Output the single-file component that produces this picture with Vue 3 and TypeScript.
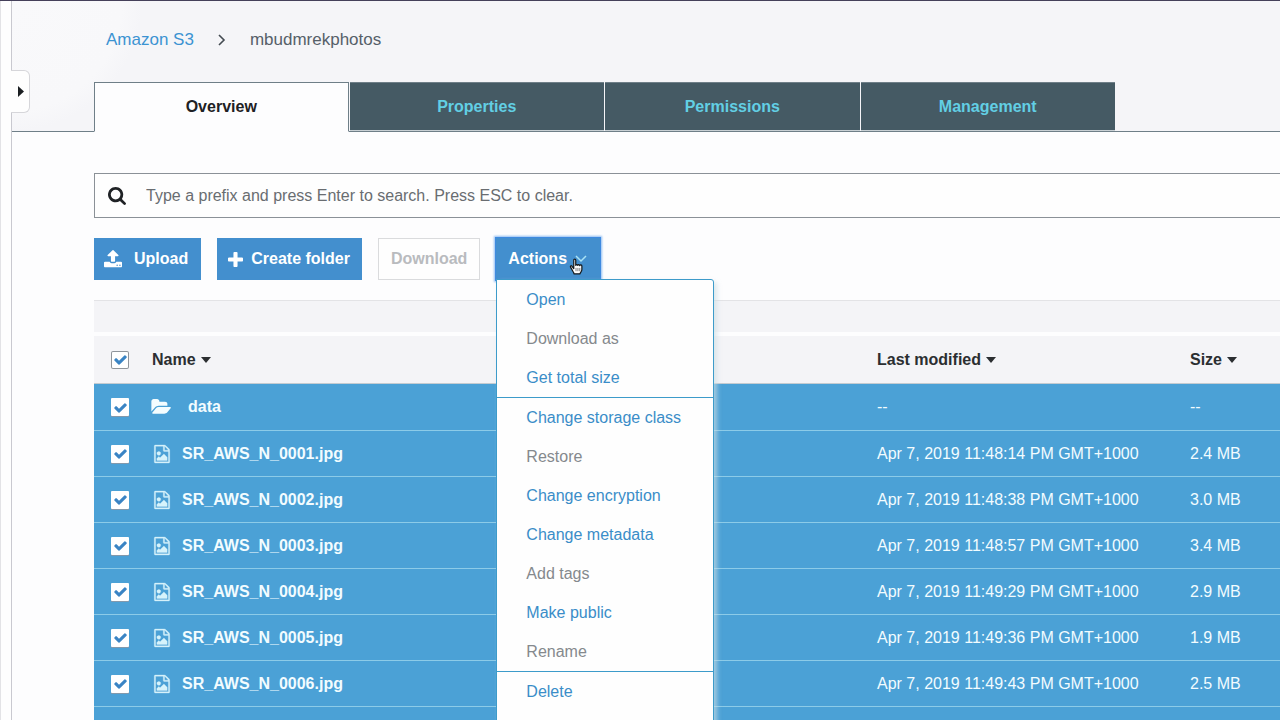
<script setup lang="ts">
import { ref } from 'vue'

interface S3Object {
  name: string
  kind: 'folder' | 'image'
  modified: string
  size: string
}

interface MenuAction {
  label: string
  enabled: boolean
}

const tabs = ['Overview', 'Properties', 'Permissions', 'Management']
const activeTab = ref('Overview')
const prefix = ref('')

const objects: S3Object[] = [
  { name: 'data', kind: 'folder', modified: '--', size: '--' },
  { name: 'SR_AWS_N_0001.jpg', kind: 'image', modified: 'Apr 7, 2019 11:48:14 PM GMT+1000', size: '2.4 MB' },
  { name: 'SR_AWS_N_0002.jpg', kind: 'image', modified: 'Apr 7, 2019 11:48:38 PM GMT+1000', size: '3.0 MB' },
  { name: 'SR_AWS_N_0003.jpg', kind: 'image', modified: 'Apr 7, 2019 11:48:57 PM GMT+1000', size: '3.4 MB' },
  { name: 'SR_AWS_N_0004.jpg', kind: 'image', modified: 'Apr 7, 2019 11:49:29 PM GMT+1000', size: '2.9 MB' },
  { name: 'SR_AWS_N_0005.jpg', kind: 'image', modified: 'Apr 7, 2019 11:49:36 PM GMT+1000', size: '1.9 MB' },
  { name: 'SR_AWS_N_0006.jpg', kind: 'image', modified: 'Apr 7, 2019 11:49:43 PM GMT+1000', size: '2.5 MB' },
]

const menuGroups: MenuAction[][] = [
  [
    { label: 'Open', enabled: true },
    { label: 'Download as', enabled: false },
    { label: 'Get total size', enabled: true },
  ],
  [
    { label: 'Change storage class', enabled: true },
    { label: 'Restore', enabled: false },
    { label: 'Change encryption', enabled: true },
    { label: 'Change metadata', enabled: true },
    { label: 'Add tags', enabled: false },
    { label: 'Make public', enabled: true },
    { label: 'Rename', enabled: false },
  ],
  [{ label: 'Delete', enabled: true }],
]

const checkPath =
  'M1671 566q0 40-28 68l-724 724-136 136q-28 28-68 28t-68-28l-136-136-362-362q-28-28-28-68t28-68l136-136q28-28 68-28t68 28l294 295 656-657q28-28 68-28t68 28l136 136q28 28 28 68z'
</script>

<template>
  <div class="shell">
    <aside class="rail">
      <button class="rail-toggle" type="button" aria-label="Expand sidebar">
        <svg width="6" height="11" viewBox="0 0 6 11"><path d="M0 0 6 5.5 0 11z" fill="#1b1f22" /></svg>
      </button>
    </aside>

    <div class="page">
      <header class="head">
        <nav class="crumbs" aria-label="Breadcrumb">
          <a href="#">Amazon S3</a>
          <svg width="8" height="12" viewBox="0 0 8 12"><path d="M1 1l5 5-5 5" fill="none" stroke="#444b52" stroke-width="1.6" /></svg>
          <span>mbudmrekphotos</span>
        </nav>
        <div class="tabs" role="tablist">
          <button
            v-for="tab in tabs"
            :key="tab"
            type="button"
            role="tab"
            class="tab"
            :class="{ active: tab === activeTab }"
            :aria-selected="tab === activeTab"
            @click="activeTab = tab"
          >{{ tab }}</button>
        </div>
      </header>

      <main class="content">
        <label class="search">
          <svg width="18" height="18" viewBox="64 128 1664 1664" aria-hidden="true">
            <path fill="#1f2225" d="M1216 832q0-185-131.5-316.5t-316.5-131.5-316.5 131.5-131.5 316.5 131.5 316.5 316.5 131.5 316.5-131.5 131.5-316.5zm512 832q0 52-38 90t-90 38q-54 0-90-38l-343-342q-179 124-399 124-143 0-273.5-55.5t-225-150-150-225-55.5-273.5 55.5-273.5 150-225 225-150 273.5-55.5 273.5 55.5 225 150 150 225 55.5 273.5q0 220-124 399l343 343q37 37 37 90z" />
          </svg>
          <input v-model="prefix" type="text" aria-label="Search by prefix" placeholder="Type a prefix and press Enter to search. Press ESC to clear." />
        </label>

        <div class="toolbar">
          <button class="btn upload" type="button">
            <svg width="18" height="18" viewBox="64 64 1664 1664" aria-hidden="true">
              <path fill="#fff" d="M1344 1472q0-26-19-45t-45-19-45 19-19 45 19 45 45 19 45-19 19-45zm256 0q0-26-19-45t-45-19-45 19-19 45 19 45 45 19 45-19 19-45zm128-224v320q0 40-28 68t-68 28h-1472q-40 0-68-28t-28-68v-320q0-40 28-68t68-28h427q21 56 70.5 92t110.5 36h256q61 0 110.5-36t70.5-92h427q40 0 68 28t28 68zm-325-648q-17 40-59 40h-256v448q0 26-19 45t-45 19h-256q-26 0-45-19t-19-45v-448h-256q-42 0-59-40-17-39 14-69l448-448q18-19 45-19t45 19l448 448q31 30 14 69z" />
            </svg>
            Upload
          </button>
          <button class="btn create" type="button">
            <svg width="15" height="15" viewBox="192 128 1408 1408" aria-hidden="true">
              <path fill="#fff" d="M1600 736v192q0 40-28 68t-68 28h-416v416q0 40-28 68t-68 28h-192q-40 0-68-28t-28-68v-416h-416q-40 0-68-28t-28-68v-192q0-40 28-68t68-28h416v-416q0-40 28-68t68-28h192q40 0 68 28t28 68v416h416q40 0 68 28t28 68z" />
            </svg>
            Create folder
          </button>
          <button class="btn download" type="button" disabled>Download</button>
          <div class="actions">
            <button class="btn actions-btn" type="button" aria-haspopup="menu" aria-expanded="true">
              Actions
              <svg width="12" height="8" viewBox="0 0 12 8" aria-hidden="true"><path d="M1 1l5 5 5-5" fill="none" stroke="#a9e2f5" stroke-width="1.5" /></svg>
            </button>
            <svg class="pointer" width="15" height="17" viewBox="0 0 15 18" aria-hidden="true">
              <path d="M4.6 11.2 2.6 8.700C1.700 7.600.6 8.600 1.200 9.700l2.600 4.600c.5.8 1 1.200 1 2.500h6.400c0-1.200 2-2.300 2-4.600V8.400c0-1.300-2.100-1.400-2.300-.3-.1-1.400-1.900-1.500-2.100-.3-.2-1.200-1.900-1.200-2.100 0V2.400C6.700.7 4.600.7 4.600 2.400z" fill="#fff" stroke="#15191c" stroke-width="1.3" stroke-linejoin="round" />
              <path d="M7 10.500v3.500M9 10.500v3.500M11 10.500v3.500" stroke="#15191c" stroke-width="0.6" />
            </svg>
            <div class="menu" role="menu">
              <div v-for="(group, index) in menuGroups" :key="index" class="menu-group">
                <button
                  v-for="item in group"
                  :key="item.label"
                  type="button"
                  role="menuitem"
                  class="menu-item"
                  :disabled="!item.enabled"
                >{{ item.label }}</button>
              </div>
            </div>
          </div>
        </div>

        <div class="summary"></div>

        <div class="listing">
          <table>
            <colgroup>
              <col class="col-check" />
              <col />
              <col class="col-modified" />
              <col class="col-size" />
            </colgroup>
            <thead>
              <tr>
                <th>
                  <label class="check">
                    <input type="checkbox" checked aria-label="Select all" />
                    <svg width="13" height="13" viewBox="96 64 1600 1600"><path :d="checkPath" /></svg>
                  </label>
                </th>
                <th>Name<span class="caret"></span></th>
                <th>Last modified<span class="caret"></span></th>
                <th>Size<span class="caret"></span></th>
              </tr>
            </thead>
            <tbody>
              <tr v-for="object in objects" :key="object.name" :class="object.kind">
                <td>
                  <label class="check">
                    <input type="checkbox" checked :aria-label="'Select ' + object.name" />
                    <svg width="13" height="13" viewBox="96 64 1600 1600"><path :d="checkPath" /></svg>
                  </label>
                </td>
                <td>
                  <span class="name">
                    <svg v-if="object.kind === 'folder'" width="19" height="14" viewBox="0 224 1816 1344" aria-hidden="true">
                      <path d="M1815 952q0 31-31 66l-336 396q-43 51-120.5 86.5t-143.5 35.5h-1088q-34 0-60.5-13t-26.5-43q0-31 31-66l336-396q43-51 120.5-86.5t143.5-35.5h1088q34 0 60.5 13t26.5 43zm-343-344v160h-832q-94 0-197 47.5t-164 119.5l-337 396-5 6q0-4-.5-12.5t-.5-12.5v-960q0-92 66-158t158-66h320q92 0 158 66t66 158v32h544q92 0 158 66t66 158z" />
                    </svg>
                    <svg v-else width="16" height="18" viewBox="128 0 1536 1792" aria-hidden="true">
                      <path d="M1596 380q28 28 48 76t20 88v1152q0 40-28 68t-68 28h-1344q-40 0-68-28t-28-68v-1600q0-40 28-68t68-28h896q40 0 88 20t76 48zm-444-244v376h376q-10-29-22-41l-313-313q-12-12-41-22zm384 1528v-1024h-416q-40 0-68-28t-28-68v-416h-768v1536h1280zm-128-448v320h-1024v-192l192-192 128 128 384-384zm-832-192q-80 0-136-56t-56-136 56-136 136-56 136 56 56 136-56 136-136 56z" />
                    </svg>
                    {{ object.name }}
                  </span>
                </td>
                <td>{{ object.modified }}</td>
                <td>{{ object.size }}</td>
              </tr>
            </tbody>
          </table>
        </div>
      </main>
    </div>
  </div>
</template>

<style>
body {
  margin: 0;
}
</style>

<style scoped>
* {
  box-sizing: border-box;
}

button,
input {
  font: inherit;
  margin: 0;
  padding: 0;
}

svg {
  flex: none;
  display: block;
}

.shell {
  display: flex;
  height: 100vh;
  overflow: hidden;
  border-top: 1px solid #45405a;
  background: #fdfdfe;
  color: #222629;
  font: 16px/20px "Liberation Sans", Arial, sans-serif;
}

.rail {
  position: relative;
  flex: none;
  width: 12px;
  border-left: 1px solid #e3e3e6;
  border-right: 1px solid #c9c9d0;
  background: #fefefe;
}

.rail-toggle {
  position: absolute;
  z-index: 2;
  top: 69px;
  left: 10px;
  display: flex;
  align-items: center;
  width: 19px;
  height: 43px;
  padding-left: 7px;
  border: 1px solid #d6d6da;
  border-left: 0;
  border-radius: 0 6px 6px 0;
  background: #fefefe;
}

.page {
  flex: 1;
  min-width: 0;
  display: flex;
  flex-direction: column;
}

.head {
  padding: 27px 0 0 82px;
  border-bottom: 1px solid #6f7f88;
  background: radial-gradient(circle at 0 0, #f9f9fb 0, #f8f8fa 110px, #f5f5f8 130px);
}

.crumbs {
  display: flex;
  align-items: center;
  gap: 24px;
  height: 24px;
  padding-left: 12px;
  font-size: 17px;
  color: #566069;
}

.crumbs a {
  color: #3c93d2;
  text-decoration: none;
}

.tabs {
  display: grid;
  grid-template-columns: repeat(4, 1fr);
  gap: 1px;
  max-width: 1021px;
  margin-top: 30px;
  margin-bottom: -1px;
}

.tab {
  height: 50px;
  border: 0;
  border-top: 1px solid #6f7f88;
  border-bottom: 1px solid #6f7f88;
  background: #455a64;
  color: #62cfe4;
  font-weight: bold;
  box-shadow: inset 0 -1px #c8d0d4;
}

.tab.active {
  border: 1px solid #6f7f88;
  border-bottom-color: #fdfdfe;
  background: #fdfdfe;
  color: #1e2124;
  box-shadow: none;
}

.content {
  flex: 1;
  display: flex;
  flex-direction: column;
  padding: 41px 0 0 82px;
}

.search {
  display: flex;
  align-items: center;
  gap: 20px;
  height: 45px;
  padding-left: 13px;
  border: 1px solid #8b9197;
  border-right: 0;
  background: #fefefe;
}

.search input {
  flex: 1;
  min-width: 0;
  height: 32px;
  border: 0;
  outline: 0;
  background: transparent;
}

.search input::placeholder {
  color: #696d71;
  opacity: 1;
}

.toolbar {
  display: flex;
  gap: 16px;
  margin-top: 20px;
}

.btn {
  display: flex;
  align-items: center;
  height: 42px;
  border: 0;
  background: #438fce;
  color: #fff;
  font-weight: bold;
  white-space: nowrap;
}

.upload {
  gap: 12px;
  padding: 0 13px 0 10px;
}

.create {
  gap: 8px;
  padding: 0 12px 0 11px;
}

.download {
  padding: 0 12px;
  border: 1px solid #dadbdd;
  background: #fefefe;
  color: #b9bbbe;
}

.actions {
  position: relative;
}

.actions-btn {
  gap: 8px;
  padding: 0 13px 0 12px;
  box-shadow: 0 0 0 1px #3f8ae0, 0 0 2px 2px #8fbdf2;
}

.pointer {
  position: absolute;
  z-index: 3;
  left: 73px;
  top: 20px;
}

.menu {
  position: absolute;
  z-index: 2;
  top: 41px;
  left: 0;
  width: 218px;
  height: 100vh;
  border: 1px solid #3d9bca;
  border-radius: 0 3px 0 0;
  background: #fefefe;
  box-shadow: 3px 3px 5px rgba(205, 222, 228, 0.7);
}

.menu-group + .menu-group {
  border-top: 1px solid #3d9bca;
}

.menu-item {
  display: block;
  width: 100%;
  height: 39px;
  padding-left: 29px;
  border: 0;
  background: none;
  color: #3a8dc8;
  text-align: left;
}

.menu-item:disabled {
  color: #85898d;
}

.summary {
  height: 32px;
  margin-top: 20px;
  margin-bottom: 4px;
  border-top: 1px solid #e3e3e6;
  background: #f4f4f7;
}

.listing {
  flex: 1;
  background: #4ba1d6;
}

table {
  width: 100%;
  table-layout: fixed;
  border-collapse: separate;
  border-spacing: 0;
}

.col-check {
  width: 58px;
}

.col-modified {
  width: 313px;
}

.col-size {
  width: 90px;
}

th,
td {
  padding: 0;
  text-align: left;
  white-space: nowrap;
}

th:first-child,
td:first-child {
  padding-left: 17px;
}

th {
  height: 48px;
  border-bottom: 1px solid #c3cbd1;
  background: #f4f4f7;
  color: #2b2e31;
}

td {
  height: 46px;
  border-bottom: 1px solid #8ccbe8;
  color: #f2fcff;
}

.folder td {
  height: 47px;
}

.caret {
  display: inline-block;
  margin-left: 5px;
  border: 5px solid transparent;
  border-top: 6px solid #2b2e31;
  border-bottom: 0;
  vertical-align: 2px;
}

.name {
  display: flex;
  align-items: center;
  gap: 12px;
  padding-left: 2px;
  font-weight: bold;
}

.folder .name {
  gap: 17px;
  padding-left: 0;
}

.name svg {
  overflow: visible;
  fill: #d6f3fb;
  stroke: #d6f3fb;
  stroke-width: 30;
}

.folder .name svg {
  fill: #f4fdff;
  stroke: none;
}

.check {
  display: grid;
  place-items: center;
  width: 18px;
  height: 18px;
}

.check input,
.check svg {
  grid-area: 1 / 1;
}

.check input {
  appearance: none;
  width: 18px;
  height: 18px;
  border-radius: 1px;
  background: #fff;
  box-shadow: 0 1px #8299ac;
}

th .check input {
  border-radius: 2px;
  box-shadow: inset 0 0 0 1px #8f959b;
}

.check svg {
  z-index: 1;
  fill: #3a84c4;
  pointer-events: none;
}
</style>
